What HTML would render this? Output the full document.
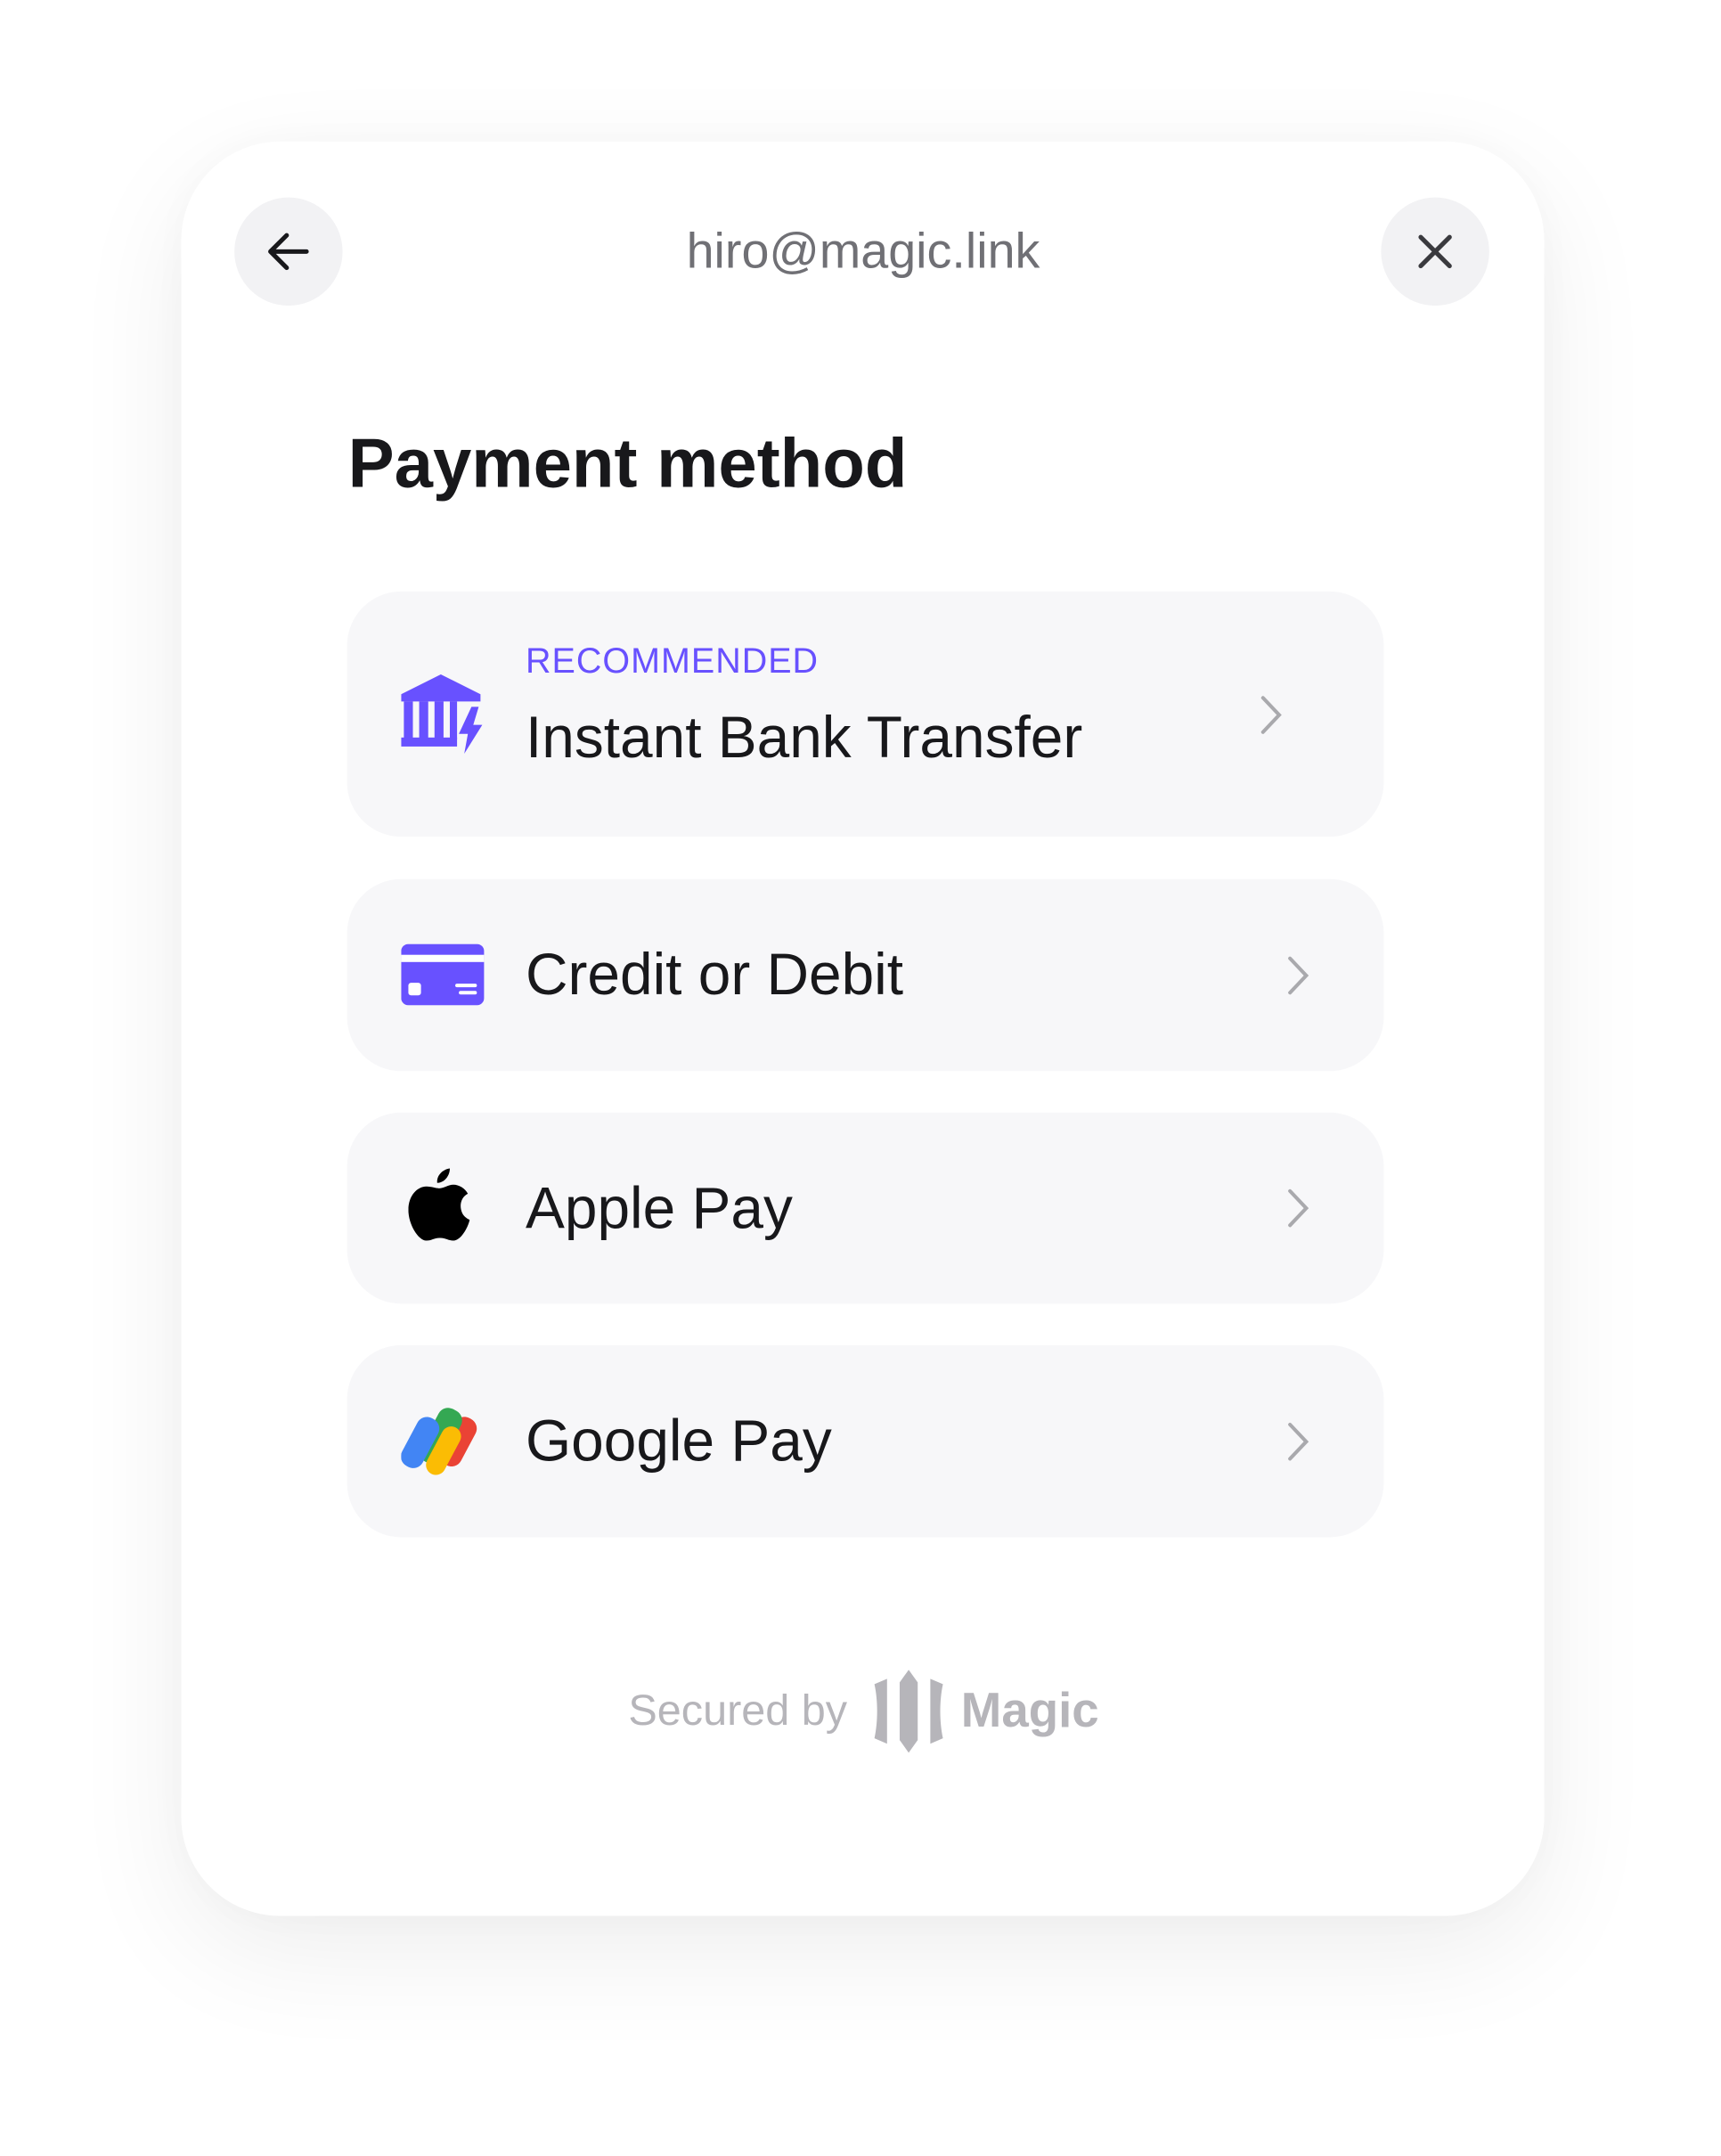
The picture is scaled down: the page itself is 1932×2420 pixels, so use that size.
<!DOCTYPE html>
<html><head><meta charset="utf-8"><style>
*{margin:0;padding:0;box-sizing:border-box}
body{width:1932px;height:2391px;background:#fff;position:relative;overflow:hidden;font-family:"Liberation Sans",sans-serif}
#w{position:absolute;left:0;top:0;width:1932px;height:2391px;transform:scale(1.012);transform-origin:0 0}
.card{position:absolute;left:201px;top:157px;width:1512px;height:1968px;border-radius:110px;background:#fff;box-shadow:0 40px 140px rgba(0,0,0,0.07),0 0 60px rgba(0,0,0,0.03)}
.btn{position:absolute;width:120px;height:120px;border-radius:60px;background:#f2f2f4;top:219px}
.email{position:absolute;top:246px;left:0;width:1915px;text-align:center;font-size:55px;color:#707075}
h1{position:absolute;left:386px;top:470px;font-size:77px;font-weight:bold;color:#18181b}
.row{position:absolute;left:385px;width:1150px;background:#f7f7f9;border-radius:60px}
.lbl{position:absolute;left:198px;font-size:65px;color:#18181b;white-space:nowrap}
.chev{position:absolute}
.ic{position:absolute;left:60px}
</style></head><body><div id="w">
<div class="card"></div>
<div class="btn" style="left:260px"><svg width="120" height="120" viewBox="0 0 120 120"><path d="M80 60H42M58 42L40 60L58 78" stroke="#18181b" stroke-width="5" fill="none" stroke-linecap="round" stroke-linejoin="round"/></svg></div>
<div class="btn" style="left:1532px"><svg width="120" height="120" viewBox="0 0 120 120"><path d="M44 44L76 76M76 44L44 76" stroke="#3a3a3e" stroke-width="5" fill="none" stroke-linecap="round"/></svg></div>
<div class="email">hiro@magic.link</div>
<h1>Payment method</h1>

<div class="row" style="top:656px;height:272px">
 <svg class="ic" style="top:92px" width="95" height="90" viewBox="0 0 95 90"><path d="M44 0L88 22V30H0V22Z" fill="#6851ff"/><rect x="3" y="30" width="10" height="42" fill="#6851ff"/><rect x="20" y="30" width="10" height="42" fill="#6851ff"/><rect x="37" y="30" width="10" height="42" fill="#6851ff"/><rect x="54" y="30" width="8" height="42" fill="#6851ff"/><rect x="0" y="70" width="62" height="10" fill="#6851ff"/><path d="M78 36L64 66H74L70 88L90 56H80L86 36Z" fill="#6851ff"/></svg>
 <div style="position:absolute;left:198px;top:56px;font-size:39px;letter-spacing:1px;color:#6851ff">RECOMMENDED</div>
 <div class="lbl" style="top:124px">Instant Bank Transfer</div>
 <svg class="chev" style="left:1010px;top:114px" width="30" height="46" viewBox="0 0 30 46"><path d="M6 4L24 23L6 42" stroke="#a9a9ad" stroke-width="4" fill="none" stroke-linecap="round"/></svg>
</div>

<div class="row" style="top:975px;height:213px">
 <svg class="ic" style="top:72px" width="92" height="68" viewBox="0 0 92 68"><rect width="92" height="68" rx="8" fill="#6851ff"/><rect x="0" y="12" width="92" height="8" fill="#fff"/><rect x="8" y="43" width="14" height="14" rx="3" fill="#fff"/><rect x="60" y="44" width="24" height="4" rx="2" fill="#fff"/><rect x="64" y="52" width="20" height="4" rx="2" fill="#fff"/></svg>
 <div class="lbl" style="top:68px">Credit or Debit</div>
 <svg class="chev" style="left:1040px;top:84px" width="30" height="46" viewBox="0 0 30 46"><path d="M6 4L24 23L6 42" stroke="#a9a9ad" stroke-width="4" fill="none" stroke-linecap="round"/></svg>
</div>

<div class="row" style="top:1234px;height:212px">
 <svg class="ic" style="top:62px;left:68px" width="70" height="84" viewBox="0 0 70 84"><path d="M46 0C46 8 40 16 32 16C31 8 38 1 46 0Z" fill="#000"/><path d="M34 22C40 22 44 18 50 18C56 18 63 22 66 28C58 32 56 42 60 50C62 54 66 56 68 57C66 66 58 80 50 80C44 80 42 77 35 77C28 77 26 80 20 80C11 80 0 62 0 46C0 30 10 20 20 20C26 20 30 22 34 22Z" fill="#000"/></svg>
 <div class="lbl" style="top:68px">Apple Pay</div>
 <svg class="chev" style="left:1040px;top:83px" width="30" height="46" viewBox="0 0 30 46"><path d="M6 4L24 23L6 42" stroke="#a9a9ad" stroke-width="4" fill="none" stroke-linecap="round"/></svg>
</div>

<div class="row" style="top:1492px;height:213px">
 <svg class="ic" style="top:66px" width="92" height="80" viewBox="0 0 92 80"><rect x="50" y="12" width="26" height="58" rx="12" transform="rotate(28 63 41)" fill="#ea4335"/><rect x="30" y="2" width="28" height="66" rx="12" transform="rotate(28 44 35)" fill="#34a853"/><rect x="36" y="22" width="22" height="58" rx="11" transform="rotate(28 47 51)" fill="#fbbc04"/><rect x="8" y="12" width="26" height="60" rx="12" transform="rotate(28 21 42)" fill="#4285f4"/></svg>
 <div class="lbl" style="top:68px">Google Pay</div>
 <svg class="chev" style="left:1040px;top:84px" width="30" height="46" viewBox="0 0 30 46"><path d="M6 4L24 23L6 42" stroke="#a9a9ad" stroke-width="4" fill="none" stroke-linecap="round"/></svg>
</div>

<div style="position:absolute;left:697px;top:1870px;font-size:48px;color:#b6b5ba">Secured by</div>
<svg style="position:absolute;left:968px;top:1852px" width="80" height="92" viewBox="0 0 80 92"><path d="M40 0L50 14V78L40 92L30 78V14Z" fill="#b6b5ba"/><path d="M2 16L16 10V82L2 76C6 58 6 34 2 16Z" fill="#b6b5ba"/><path d="M78 16L64 10V82L78 76C74 58 74 34 78 16Z" fill="#b6b5ba"/></svg>
<div style="position:absolute;left:1066px;top:1866px;font-size:54px;font-weight:bold;color:#b6b5ba">Magic</div>
</div></body></html>
